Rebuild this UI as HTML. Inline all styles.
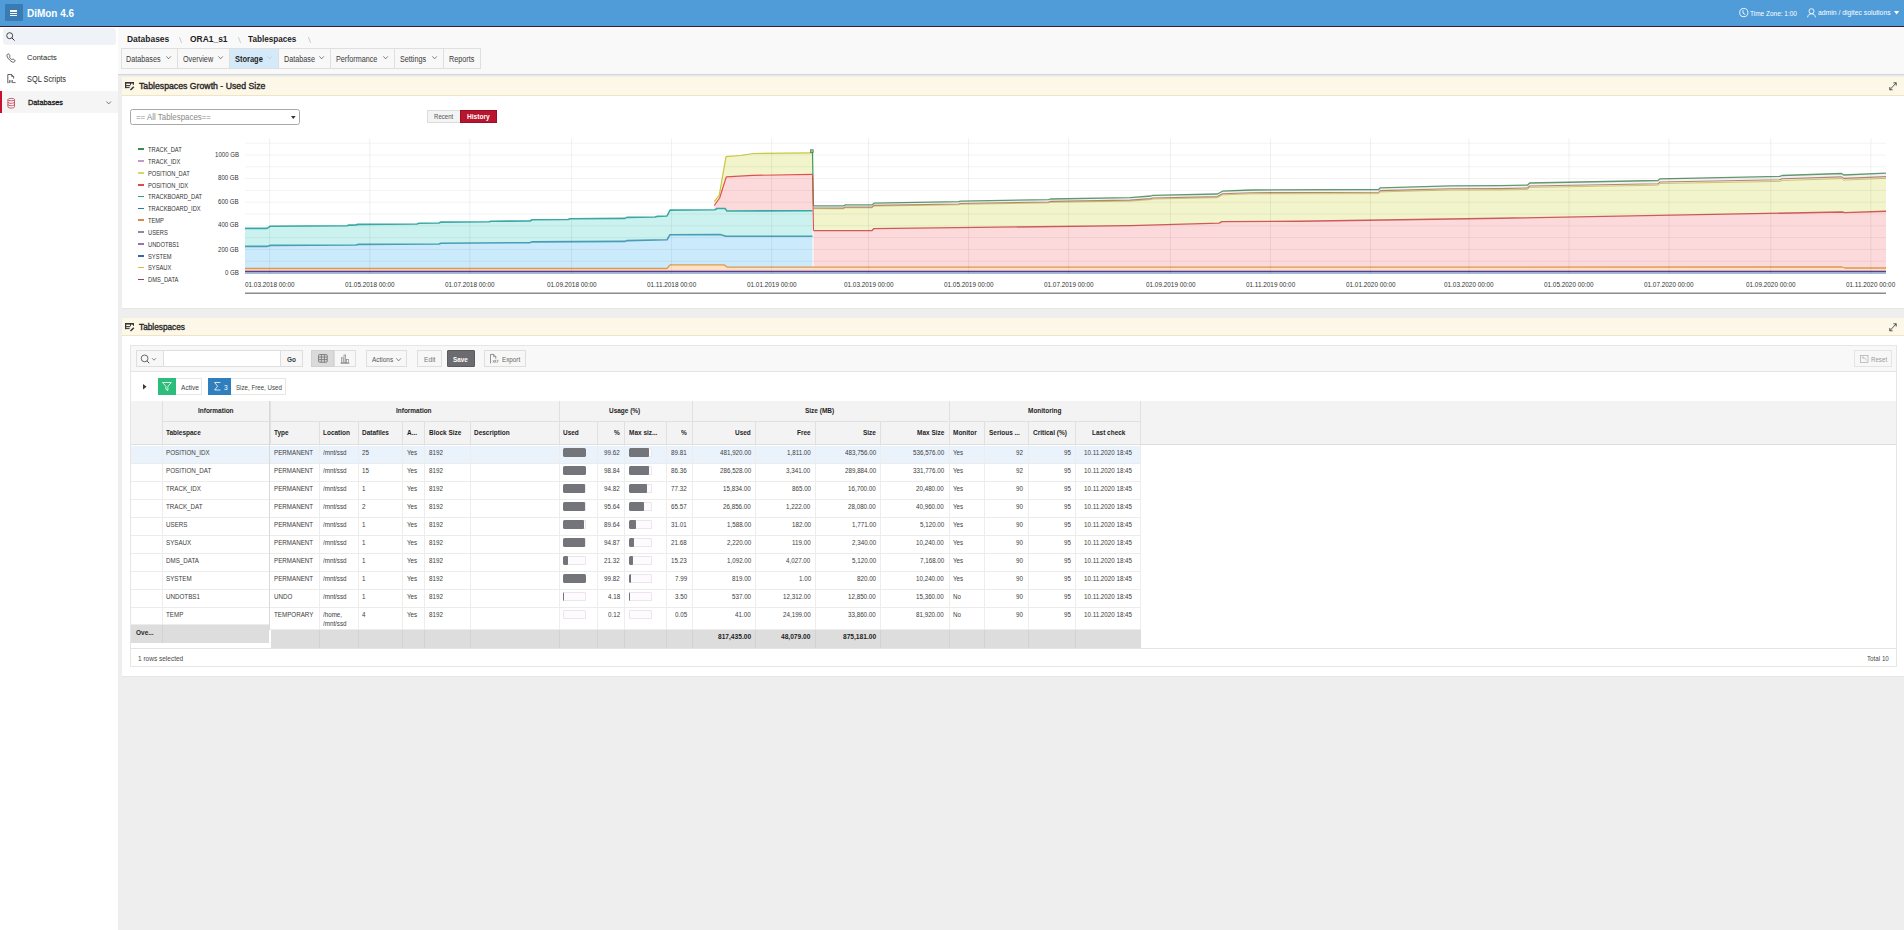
<!DOCTYPE html>
<html><head><meta charset="utf-8"><title>DiMon</title>
<style>
*{box-sizing:border-box;margin:0;padding:0}
html,body{width:1904px;height:930px;overflow:hidden}
body{position:relative;background:#eeeeee;font-family:"Liberation Sans", sans-serif;color:#333}
.a{position:absolute;white-space:nowrap;line-height:14px}
svg{position:absolute;overflow:visible}
</style></head><body>

<div class="a" style="left:0;top:0;width:1904px;height:26px;background:#4f9cd9"></div>
<div class="a" style="left:0;top:26px;width:1904px;height:1px;background:#3b1c33"></div>
<div class="a" style="left:5px;top:3.6px;width:17.5px;height:17.8px;background:#3b7bb4;border-radius:1px"></div>
<div class="a" style="left:10px;top:10.3px;width:7.1px;height:1.3px;background:#f4f8fb"></div>
<div class="a" style="left:10px;top:12.9px;width:7.1px;height:1.3px;background:#f4f8fb"></div>
<div class="a" style="left:10px;top:14.9px;width:7.1px;height:1.3px;background:#f4f8fb"></div>
<div class="a" style="left:27.30px;top:6.42px;font-size:10.60px;color:#fff;font-weight:bold;transform:scaleX(0.940);transform-origin:0 0">DiMon 4.6</div>
<svg style="left:1738.5px;top:8px" width="10" height="10" viewBox="0 0 10 10"><circle cx="4.8" cy="4.6" r="4.1" fill="none" stroke="#fff" stroke-width="0.9"/><path d="M4 2.2V5.2L6.4 6.6" fill="none" stroke="#fff" stroke-width="0.9"/></svg>
<div class="a" style="left:1750.30px;top:6.62px;font-size:8.00px;color:#fff;transform:scaleX(0.810);transform-origin:0 0">Time Zone: 1:00</div>
<svg style="left:1806.5px;top:8px" width="9" height="10" viewBox="0 0 9 10"><circle cx="4.5" cy="3.2" r="2.5" fill="none" stroke="#fff" stroke-width="0.9"/><path d="M0.6 9.3C0.9 6.8 2.5 5.8 4.5 5.8S8.1 6.8 8.4 9.3" fill="none" stroke="#fff" stroke-width="0.9"/></svg>
<div class="a" style="left:1817.50px;top:6.42px;font-size:8.00px;color:#fff;transform:scaleX(0.850);transform-origin:0 0">admin / digitec solutions</div>
<svg style="left:1893.5px;top:10.8px" width="6" height="5" viewBox="0 0 6 5"><path d="M0 0H5.2L2.6 3.6Z" fill="#fff"/></svg>
<div class="a" style="left:0;top:27px;width:117.6px;height:903px;background:#fff"></div>
<div class="a" style="left:3px;top:28.2px;width:111.5px;height:15.4px;background:#eff3f7;border-radius:2px;box-shadow:0.5px 0.6px 0 #e6e8ea"></div>
<svg style="left:6px;top:32px" width="10" height="10" viewBox="0 0 10 10"><circle cx="3.7" cy="3.7" r="3" fill="none" stroke="#333" stroke-width="0.9"/><path d="M5.9 5.9L8.6 8.6" stroke="#333" stroke-width="1"/></svg>
<svg style="left:6px;top:52.5px" width="10" height="10" viewBox="0 0 10 10"><path d="M1.2 1.6C1.8 0.8 2.4 0.6 2.9 1.2L3.9 2.6C4.2 3.1 3.9 3.5 3.4 3.9C3.6 4.8 5.2 6.5 6.1 6.7C6.5 6.2 6.9 5.9 7.4 6.2L8.8 7.2C9.4 7.7 9.1 8.3 8.4 8.9C7.4 9.7 5.6 9 3.6 7C1.4 4.8 0.4 2.6 1.2 1.6Z" fill="none" stroke="#444" stroke-width="0.85"/></svg>
<div class="a" style="left:27.00px;top:50.89px;font-size:7.80px;color:#2a2a2a;transform:scaleX(0.970);transform-origin:0 0">Contacts</div>
<svg style="left:6.5px;top:74.4px" width="10" height="10" viewBox="0 0 10 10"><path d="M0.8 9.2V0.5H4.6L6.6 2.5V4.6" fill="none" stroke="#444" stroke-width="0.85"/><path d="M4.6 0.5V2.5H6.6" fill="none" stroke="#444" stroke-width="0.7"/><path d="M2.6 6.2V8.6H1.6M4 6.2V8.6M5.4 6.2V8.6H8.6" fill="none" stroke="#444" stroke-width="0.8"/></svg>
<div class="a" style="left:27.00px;top:73.05px;font-size:8.20px;color:#2a2a2a;transform:scaleX(0.900);transform-origin:0 0">SQL Scripts</div>
<div class="a" style="left:0;top:90.8px;width:117.6px;height:22.6px;background:#f5f5f5"></div>
<div class="a" style="left:0;top:90.8px;width:2px;height:22.6px;background:#c8102e"></div>
<svg style="left:7.4px;top:97.5px" width="9" height="11" viewBox="0 0 9 11"><ellipse cx="4.2" cy="1.6" rx="3.3" ry="1.2" fill="none" stroke="#c0394b" stroke-width="0.8"/><path d="M0.9 1.6V8.8C0.9 9.6 2.4 10.1 4.2 10.1S7.5 9.6 7.5 8.8V1.6M0.9 4C0.9 4.8 2.4 5.3 4.2 5.3S7.5 4.8 7.5 4M0.9 6.4C0.9 7.2 2.4 7.7 4.2 7.7S7.5 7.2 7.5 6.4" fill="none" stroke="#c0394b" stroke-width="0.8"/></svg>
<div class="a" style="left:27.50px;top:95.86px;font-size:7.60px;color:#1a1a1a;transform:scaleX(0.965);transform-origin:0 0;-webkit-text-stroke:0.3px #1a1a1a">Databases</div>
<svg style="left:105.8px;top:101px" width="6" height="4" viewBox="0 0 6 4"><path d="M0.4 0.5L2.7 2.9L5 0.5" fill="none" stroke="#555" stroke-width="0.8"/></svg>
<div class="a" style="left:117.6px;top:27px;width:1786.4px;height:47.5px;background:#f9f9fa;border-bottom:1px solid #d6d6d6"></div>
<div class="a" style="left:117.6px;top:74.5px;width:1786.4px;height:1.5px;background:#e9e9e9"></div>
<div class="a" style="left:126.60px;top:31.74px;font-size:9.40px;color:#1e1e1e;font-weight:bold;transform:scaleX(0.900);transform-origin:0 0">Databases</div>
<div class="a" style="left:189.80px;top:31.74px;font-size:9.40px;color:#1e1e1e;font-weight:bold;transform:scaleX(0.900);transform-origin:0 0">ORA1_s1</div>
<div class="a" style="left:248.30px;top:31.74px;font-size:9.40px;color:#1e1e1e;font-weight:bold;transform:scaleX(0.870);transform-origin:0 0">Tablespaces</div>
<svg style="left:178.9px;top:36.7px" width="4" height="6" viewBox="0 0 4 6"><path d="M0.4 0.2L2.6 5.8" stroke="#b4b4b4" stroke-width="0.7"/></svg>
<svg style="left:237.8px;top:36.7px" width="4" height="6" viewBox="0 0 4 6"><path d="M0.4 0.2L2.6 5.8" stroke="#b4b4b4" stroke-width="0.7"/></svg>
<svg style="left:307.5px;top:36.7px" width="4" height="6" viewBox="0 0 4 6"><path d="M0.4 0.2L2.6 5.8" stroke="#b4b4b4" stroke-width="0.7"/></svg>
<div class="a" style="left:121.2px;top:48.4px;width:56.3px;height:20px;background:#f8f8f8"></div>
<div class="a" style="left:120.7px;top:48.4px;width:0.8px;height:20px;background:#dfdfdf"></div>
<div class="a" style="left:126.40px;top:51.95px;font-size:8.50px;color:#3a3a3a;transform:scaleX(0.850);transform-origin:0 0">Databases</div>
<svg style="left:166.0px;top:56px" width="6" height="4" viewBox="0 0 6 4"><path d="M0.4 0.4L2.6 2.8L4.8 0.4" fill="none" stroke="#555" stroke-width="0.75"/></svg>
<div class="a" style="left:177.5px;top:48.4px;width:52.3px;height:20px;background:#f8f8f8"></div>
<div class="a" style="left:177.0px;top:48.4px;width:0.8px;height:20px;background:#dfdfdf"></div>
<div class="a" style="left:182.70px;top:51.95px;font-size:8.50px;color:#3a3a3a;transform:scaleX(0.850);transform-origin:0 0">Overview</div>
<svg style="left:218.3px;top:56px" width="6" height="4" viewBox="0 0 6 4"><path d="M0.4 0.4L2.6 2.8L4.8 0.4" fill="none" stroke="#555" stroke-width="0.75"/></svg>
<div class="a" style="left:229.8px;top:48.4px;width:48.9px;height:20px;background:#d5eaf8"></div>
<div class="a" style="left:229.3px;top:48.4px;width:0.8px;height:20px;background:#dfdfdf"></div>
<div class="a" style="left:234.70px;top:51.95px;font-size:8.50px;color:#1e1e1e;font-weight:bold;transform:scaleX(0.880);transform-origin:0 0">Storage</div>
<svg style="left:267.2px;top:56px" width="6" height="4" viewBox="0 0 6 4"><path d="M0.4 0.4L2.6 2.8L4.8 0.4" fill="none" stroke="#a9cce3" stroke-width="0.75"/></svg>
<div class="a" style="left:278.7px;top:48.4px;width:51.8px;height:20px;background:#f8f8f8"></div>
<div class="a" style="left:278.2px;top:48.4px;width:0.8px;height:20px;background:#dfdfdf"></div>
<div class="a" style="left:283.90px;top:51.95px;font-size:8.50px;color:#3a3a3a;transform:scaleX(0.850);transform-origin:0 0">Database</div>
<svg style="left:319.0px;top:56px" width="6" height="4" viewBox="0 0 6 4"><path d="M0.4 0.4L2.6 2.8L4.8 0.4" fill="none" stroke="#555" stroke-width="0.75"/></svg>
<div class="a" style="left:330.5px;top:48.4px;width:63.9px;height:20px;background:#f8f8f8"></div>
<div class="a" style="left:330.0px;top:48.4px;width:0.8px;height:20px;background:#dfdfdf"></div>
<div class="a" style="left:335.70px;top:51.95px;font-size:8.50px;color:#3a3a3a;transform:scaleX(0.850);transform-origin:0 0">Performance</div>
<svg style="left:382.9px;top:56px" width="6" height="4" viewBox="0 0 6 4"><path d="M0.4 0.4L2.6 2.8L4.8 0.4" fill="none" stroke="#555" stroke-width="0.75"/></svg>
<div class="a" style="left:394.4px;top:48.4px;width:48.9px;height:20px;background:#f8f8f8"></div>
<div class="a" style="left:393.9px;top:48.4px;width:0.8px;height:20px;background:#dfdfdf"></div>
<div class="a" style="left:399.60px;top:51.95px;font-size:8.50px;color:#3a3a3a;transform:scaleX(0.850);transform-origin:0 0">Settings</div>
<svg style="left:431.8px;top:56px" width="6" height="4" viewBox="0 0 6 4"><path d="M0.4 0.4L2.6 2.8L4.8 0.4" fill="none" stroke="#555" stroke-width="0.75"/></svg>
<div class="a" style="left:443.3px;top:48.4px;width:36.5px;height:20px;background:#f8f8f8"></div>
<div class="a" style="left:442.8px;top:48.4px;width:0.8px;height:20px;background:#dfdfdf"></div>
<div class="a" style="left:448.50px;top:51.95px;font-size:8.50px;color:#3a3a3a;transform:scaleX(0.850);transform-origin:0 0">Reports</div>
<div class="a" style="left:121.2px;top:48.2px;width:359.4px;height:20.6px;border:0.8px solid #dfdfdf"></div>
<div class="a" style="left:121.6px;top:77px;width:1782.4px;height:231px;background:#fff;box-shadow:0 0.8px 0 #e2e2e2"></div>
<div class="a" style="left:121.6px;top:77px;width:1782.4px;height:18.8px;background:#fcf7e6;border-bottom:0.8px solid #efe4c6"></div>
<svg style="left:122px;top:78px" width="16" height="16" viewBox="0 0 16 16"><g fill="#363636"><rect x="3" y="4" width="8.9" height="1.6"/><rect x="3" y="4" width="1.2" height="6.1"/><rect x="8" y="4" width="1" height="2.9"/><rect x="10.9" y="4" width="1" height="2.9"/><rect x="3" y="7.1" width="5.3" height="1.1"/><rect x="3" y="9.1" width="4.6" height="1"/></g><path d="M8.5 12L11.8 8.7" stroke="#363636" stroke-width="1.5"/></svg>
<div class="a" style="left:138.80px;top:79.45px;font-size:8.80px;color:#262626;transform:scaleX(0.990);transform-origin:0 0;-webkit-text-stroke:0.35px #262626">Tablespaces Growth - Used Size</div>
<svg style="left:1889px;top:82px" width="8" height="8.6" viewBox="0 0 8 8.6"><path d="M0.8 7.8L7.2 0.8M4.4 0.8H7.2V3.6M0.8 5V7.8H3.6" fill="none" stroke="#3a3a3a" stroke-width="0.85"/></svg>
<div class="a" style="left:121.6px;top:317.7px;width:1782.4px;height:358.00000000000006px;background:#fff;box-shadow:0 0.8px 0 #e2e2e2"></div>
<div class="a" style="left:121.6px;top:317.7px;width:1782.4px;height:18.8px;background:#fcf7e6;border-bottom:0.8px solid #efe4c6"></div>
<svg style="left:122px;top:319px" width="16" height="16" viewBox="0 0 16 16"><g fill="#363636"><rect x="3" y="4" width="8.9" height="1.6"/><rect x="3" y="4" width="1.2" height="6.1"/><rect x="8" y="4" width="1" height="2.9"/><rect x="10.9" y="4" width="1" height="2.9"/><rect x="3" y="7.1" width="5.3" height="1.1"/><rect x="3" y="9.1" width="4.6" height="1"/></g><path d="M8.5 12L11.8 8.7" stroke="#363636" stroke-width="1.5"/></svg>
<div class="a" style="left:138.80px;top:319.54px;font-size:9.10px;color:#262626;transform:scaleX(0.910);transform-origin:0 0;-webkit-text-stroke:0.35px #262626">Tablespaces</div>
<svg style="left:1889px;top:322.7px" width="8" height="8.6" viewBox="0 0 8 8.6"><path d="M0.8 7.8L7.2 0.8M4.4 0.8H7.2V3.6M0.8 5V7.8H3.6" fill="none" stroke="#3a3a3a" stroke-width="0.85"/></svg>
<div class="a" style="left:130.2px;top:109.2px;width:169.4px;height:15.5px;border:0.9px solid #a8a8a8;border-radius:2.5px;background:#fff"></div>
<div class="a" style="left:136.30px;top:111.05px;font-size:8.20px;color:#8a8a8a;transform:scaleX(0.965);transform-origin:0 0">== All Tablespaces==</div>
<svg style="left:290.8px;top:115.8px" width="5" height="4" viewBox="0 0 5 4"><path d="M0 0H4.6L2.3 2.9Z" fill="#333"/></svg>
<div class="a" style="left:426.6px;top:109.5px;width:33.6px;height:13.1px;background:#f4f4f4;border:0.8px solid #dcdcdc;border-right:none"></div>
<div class="a" style="left:433.60px;top:109.91px;font-size:6.60px;color:#555;transform:scaleX(0.920);transform-origin:0 0">Recent</div>
<div class="a" style="left:459.9px;top:109.5px;width:36.8px;height:13.1px;background:#b8152f;border:0.6px solid #9a0f25"></div>
<div class="a" style="left:466.70px;top:110.14px;font-size:7.10px;color:#fff;font-weight:bold;transform:scaleX(0.930);transform-origin:0 0">History</div>
<div class="a" style="left:137.9px;top:148.29999999999998px;width:6.1px;height:1.9px;background:#3d8a4f"></div>
<div class="a" style="left:148.00px;top:143.07px;font-size:7.00px;color:#333;transform:scaleX(0.820);transform-origin:0 0">TRACK_DAT</div>
<div class="a" style="left:137.9px;top:160.2px;width:6.1px;height:1.9px;background:#c39ac6"></div>
<div class="a" style="left:148.00px;top:154.97px;font-size:7.00px;color:#333;transform:scaleX(0.820);transform-origin:0 0">TRACK_IDX</div>
<div class="a" style="left:137.9px;top:171.9px;width:6.1px;height:1.9px;background:#d3d86a"></div>
<div class="a" style="left:148.00px;top:166.67px;font-size:7.00px;color:#333;transform:scaleX(0.820);transform-origin:0 0">POSITION_DAT</div>
<div class="a" style="left:137.9px;top:183.79999999999998px;width:6.1px;height:1.9px;background:#e04a4a"></div>
<div class="a" style="left:148.00px;top:178.57px;font-size:7.00px;color:#333;transform:scaleX(0.820);transform-origin:0 0">POSITION_IDX</div>
<div class="a" style="left:137.9px;top:195.6px;width:6.1px;height:1.9px;background:#2a9a8a"></div>
<div class="a" style="left:148.00px;top:190.37px;font-size:7.00px;color:#333;transform:scaleX(0.820);transform-origin:0 0">TRACKBOARD_DAT</div>
<div class="a" style="left:137.9px;top:207.6px;width:6.1px;height:1.9px;background:#2a7aa6"></div>
<div class="a" style="left:148.00px;top:202.37px;font-size:7.00px;color:#333;transform:scaleX(0.820);transform-origin:0 0">TRACKBOARD_IDX</div>
<div class="a" style="left:137.9px;top:219.29999999999998px;width:6.1px;height:1.9px;background:#d98a4a"></div>
<div class="a" style="left:148.00px;top:214.07px;font-size:7.00px;color:#333;transform:scaleX(0.820);transform-origin:0 0">TEMP</div>
<div class="a" style="left:137.9px;top:231.1px;width:6.1px;height:1.9px;background:#8a8a9a"></div>
<div class="a" style="left:148.00px;top:225.87px;font-size:7.00px;color:#333;transform:scaleX(0.820);transform-origin:0 0">USERS</div>
<div class="a" style="left:137.9px;top:243.1px;width:6.1px;height:1.9px;background:#9a70b0"></div>
<div class="a" style="left:148.00px;top:237.87px;font-size:7.00px;color:#333;transform:scaleX(0.820);transform-origin:0 0">UNDOTBS1</div>
<div class="a" style="left:137.9px;top:255.1px;width:6.1px;height:1.9px;background:#3a6a9a"></div>
<div class="a" style="left:148.00px;top:249.87px;font-size:7.00px;color:#333;transform:scaleX(0.820);transform-origin:0 0">SYSTEM</div>
<div class="a" style="left:137.9px;top:266.6px;width:6.1px;height:1.9px;background:#d4b84a"></div>
<div class="a" style="left:148.00px;top:261.37px;font-size:7.00px;color:#333;transform:scaleX(0.820);transform-origin:0 0">SYSAUX</div>
<div class="a" style="left:137.9px;top:278.5px;width:6.1px;height:1.9px;background:#a03a6a"></div>
<div class="a" style="left:148.00px;top:273.27px;font-size:7.00px;color:#333;transform:scaleX(0.820);transform-origin:0 0">DMS_DATA</div>
<div class="a" style="left:214.96px;top:147.97px;font-size:7.00px;color:#333;transform:scaleX(0.870);transform-origin:0 0">1000 GB</div>
<div class="a" style="left:218.35px;top:171.37px;font-size:7.00px;color:#333;transform:scaleX(0.870);transform-origin:0 0">800 GB</div>
<div class="a" style="left:218.35px;top:194.57px;font-size:7.00px;color:#333;transform:scaleX(0.870);transform-origin:0 0">600 GB</div>
<div class="a" style="left:218.35px;top:218.37px;font-size:7.00px;color:#333;transform:scaleX(0.870);transform-origin:0 0">400 GB</div>
<div class="a" style="left:218.35px;top:242.57px;font-size:7.00px;color:#333;transform:scaleX(0.870);transform-origin:0 0">200 GB</div>
<div class="a" style="left:225.12px;top:265.77px;font-size:7.00px;color:#333;transform:scaleX(0.870);transform-origin:0 0">0 GB</div>
<svg style="left:0;top:0" width="1904" height="300" viewBox="0 0 1904 300">
<polygon points="245.0,246.4 267.0,246.4 270.0,245.4 356.0,245.0 358.0,244.4 439.0,244.0 441.0,243.2 530.0,242.6 532.0,241.9 625.0,241.4 627.0,240.6 667.0,239.8 670.0,234.7 720.0,234.5 726.0,236.3 812.5,236.3 812.5,267.1 727.0,267.1 724.0,264.8 670.0,264.8 667.0,268.5 245.0,268.5" fill="#cbeafb" fill-opacity="1"/>
<polygon points="245.0,228.4 267.0,228.4 270.0,226.3 347.0,225.8 349.0,225.1 356.0,224.9 358.0,224.4 417.0,224.0 419.0,223.3 439.0,223.0 441.0,222.1 489.0,221.8 491.0,221.2 530.0,221.0 532.0,219.8 568.0,219.5 570.0,218.7 625.0,218.4 627.0,217.4 655.0,217.0 657.0,216.4 667.0,216.0 670.0,210.1 715.0,209.7 717.0,208.5 725.0,208.5 727.0,211.0 812.5,210.7 812.5,236.3 726.0,236.3 720.0,234.5 670.0,234.7 667.0,239.8 627.0,240.6 625.0,241.4 532.0,241.9 530.0,242.6 441.0,243.2 439.0,244.0 358.0,244.4 356.0,245.0 270.0,245.4 267.0,246.4 245.0,246.4" fill="#cbf2ef" fill-opacity="1"/>
<polygon points="714.3,205.5 719.6,198.0 726.3,176.9 752.7,175.4 812.5,174.3 812.5,210.7 727.0,211.0 725.0,208.5 717.0,208.5 715.0,209.7 714.3,209.7" fill="#fcd9da" fill-opacity="1"/>
<polygon points="714.3,201.7 719.3,195.0 726.0,156.6 740.6,155.5 753.0,153.5 812.5,152.8 812.5,174.3 752.7,175.4 726.3,176.9 719.6,198.0 714.3,205.5" fill="#f2f4cc" fill-opacity="1"/>
<polygon points="813.5,230.6 872.0,230.6 874.0,228.6 1130.0,225.6 1219.0,223.1 1222.0,221.6 1300.0,221.3 1450.0,219.0 1500.0,218.3 1842.0,212.0 1845.0,212.6 1886.0,211.3 1886.0,268.0 1845.0,268.0 1842.0,267.0 813.5,267.1" fill="#fcd9da" fill-opacity="1"/>
<polygon points="813.5,208.7 843.5,208.8 845.5,207.8 872.0,207.8 874.0,206.1 958.6,204.8 960.6,204.3 1048.5,202.9 1050.5,202.3 1130.0,201.1 1150.8,199.6 1152.8,199.0 1217.4,197.7 1222.4,194.9 1251.0,193.8 1378.7,193.6 1380.4,191.9 1450.0,190.0 1500.0,189.9 1527.6,189.4 1529.6,187.4 1658.0,185.2 1660.0,183.5 1780.0,181.4 1782.0,180.5 1841.6,178.6 1843.7,180.1 1886.0,178.3 1886.0,211.3 1845.0,212.6 1842.0,212.0 1500.0,218.3 1450.0,219.0 1300.0,221.3 1222.0,221.6 1219.0,223.1 1130.0,225.6 874.0,228.6 872.0,230.6 813.5,230.6" fill="#f2f4cc" fill-opacity="1"/>
<polygon points="813.5,205.9 843.5,205.9 845.5,204.9 872.0,204.9 874.0,203.2 958.6,201.7 960.6,201.2 1048.5,199.6 1050.5,199.0 1130.0,197.6 1150.8,196.0 1152.8,195.4 1217.4,194.0 1222.4,191.2 1251.0,190.0 1378.7,189.5 1380.4,187.8 1450.0,185.8 1500.0,185.6 1527.6,185.0 1529.6,183.0 1658.0,180.5 1660.0,178.8 1780.0,176.4 1782.0,175.5 1841.6,173.5 1843.7,175.0 1886.0,173.1 1886.0,178.3 1843.7,180.1 1841.6,178.6 1782.0,180.5 1780.0,181.4 1660.0,183.5 1658.0,185.2 1529.6,187.4 1527.6,189.4 1500.0,189.9 1450.0,190.0 1380.4,191.9 1378.7,193.6 1251.0,193.8 1222.4,194.9 1217.4,197.7 1152.8,199.0 1150.8,199.6 1130.0,201.1 1050.5,202.3 1048.5,202.9 960.6,204.3 958.6,204.8 874.0,206.1 872.0,207.8 845.5,207.8 843.5,208.8 813.5,208.7" fill="#f6f0f2" fill-opacity="1"/>
<polygon points="245.0,268.5 667.0,268.5 670.0,264.8 724.0,264.8 727.0,267.1 1842.0,267.0 1845.0,268.0 1886.0,268.0 1886.0,270.6 245.0,270.6" fill="#fde3c4" fill-opacity="1"/>
<rect x="245" y="272" width="1641" height="1.9" fill="#a4b4dc"/>
<line x1="245" y1="270.4" x2="1886" y2="270.4" stroke="#e8b8dc" stroke-width="0.6"/>
<line x1="245" y1="271.4" x2="1886" y2="271.4" stroke="#5e3e7e" stroke-width="1.1"/>
<polyline points="245.0,268.5 667.0,268.5 670.0,264.8 724.0,264.8 727.0,267.1 1842.0,267.0 1845.0,268.0 1886.0,268.0" fill="none" stroke="#d99a52" stroke-width="1.3" stroke-linejoin="round"/>
<polyline points="245.0,246.4 267.0,246.4 270.0,245.4 356.0,245.0 358.0,244.4 439.0,244.0 441.0,243.2 530.0,242.6 532.0,241.9 625.0,241.4 627.0,240.6 667.0,239.8 670.0,234.7 720.0,234.5 726.0,236.3 812.5,236.3" fill="none" stroke="#4a9db6" stroke-width="1.6" stroke-linejoin="round"/>
<polyline points="245.0,228.4 267.0,228.4 270.0,226.3 347.0,225.8 349.0,225.1 356.0,224.9 358.0,224.4 417.0,224.0 419.0,223.3 439.0,223.0 441.0,222.1 489.0,221.8 491.0,221.2 530.0,221.0 532.0,219.8 568.0,219.5 570.0,218.7 625.0,218.4 627.0,217.4 655.0,217.0 657.0,216.4 667.0,216.0 670.0,210.1 715.0,209.7 717.0,208.5 725.0,208.5 727.0,211.0 812.5,210.7" fill="none" stroke="#3aa9a6" stroke-width="1.6" stroke-linejoin="round"/>
<polyline points="714.3,205.5 719.6,198.0 726.3,176.9 752.7,175.4 812.5,174.3" fill="none" stroke="#e05050" stroke-width="1.2" stroke-linejoin="round"/>
<polyline points="714.3,201.7 719.3,195.0 726.0,156.6 740.6,155.5 753.0,153.5 812.5,152.8" fill="none" stroke="#c8c83a" stroke-width="1.2" stroke-linejoin="round"/>
<polyline points="813.5,230.6 872.0,230.6 874.0,228.6 1130.0,225.6 1219.0,223.1 1222.0,221.6 1300.0,221.3 1450.0,219.0 1500.0,218.3 1842.0,212.0 1845.0,212.6 1886.0,211.3" fill="none" stroke="#cf5a5a" stroke-width="1.4" stroke-linejoin="round"/>
<polyline points="813.5,208.7 843.5,208.8 845.5,207.8 872.0,207.8 874.0,206.1 958.6,204.8 960.6,204.3 1048.5,202.9 1050.5,202.3 1130.0,201.1 1150.8,199.6 1152.8,199.0 1217.4,197.7 1222.4,194.9 1251.0,193.8 1378.7,193.6 1380.4,191.9 1450.0,190.0 1500.0,189.9 1527.6,189.4 1529.6,187.4 1658.0,185.2 1660.0,183.5 1780.0,181.4 1782.0,180.5 1841.6,178.6 1843.7,180.1 1886.0,178.3" fill="none" stroke="#c8c060" stroke-width="0.9" stroke-linejoin="round"/>
<polyline points="813.5,208.0 843.5,208.1 845.5,207.1 872.0,207.1 874.0,205.4 958.6,204.0 960.6,203.5 1048.5,202.0 1050.5,201.4 1130.0,200.1 1150.8,198.6 1152.8,198.0 1217.4,196.6 1222.4,193.8 1251.0,192.7 1378.7,192.3 1380.4,190.6 1450.0,188.7 1500.0,188.6 1527.6,188.0 1529.6,186.0 1658.0,183.7 1660.0,182.0 1780.0,179.7 1782.0,178.8 1841.6,176.9 1843.7,178.4 1886.0,176.6" fill="none" stroke="#b08a70" stroke-width="1.1" stroke-linejoin="round"/>
<polyline points="813.5,205.9 843.5,205.9 845.5,204.9 872.0,204.9 874.0,203.2 958.6,201.7 960.6,201.2 1048.5,199.6 1050.5,199.0 1130.0,197.6 1150.8,196.0 1152.8,195.4 1217.4,194.0 1222.4,191.2 1251.0,190.0 1378.7,189.5 1380.4,187.8 1450.0,185.8 1500.0,185.6 1527.6,185.0 1529.6,183.0 1658.0,180.5 1660.0,178.8 1780.0,176.4 1782.0,175.5 1841.6,173.5 1843.7,175.0 1886.0,173.1" fill="none" stroke="#5f9a70" stroke-width="1.3" stroke-linejoin="round"/>
<polyline points="812.5,152 813.5,205.9" fill="none" stroke="#3e9a58" stroke-width="1.2"/>
<polyline points="812.5,174.3 813.5,230.6" fill="none" stroke="#e05050" stroke-width="1.1"/>
<rect x="810.6" y="149.8" width="2.6" height="2.6" fill="#9fc0a0" stroke="#3e7a50" stroke-width="0.7"/>
<line x1="245" y1="273.0" x2="1886" y2="273.0" stroke="#000" stroke-opacity="0.065" stroke-width="0.8"/>
<line x1="245" y1="261.2" x2="1886" y2="261.2" stroke="#000" stroke-opacity="0.065" stroke-width="0.8"/>
<line x1="245" y1="249.4" x2="1886" y2="249.4" stroke="#000" stroke-opacity="0.065" stroke-width="0.8"/>
<line x1="245" y1="237.6" x2="1886" y2="237.6" stroke="#000" stroke-opacity="0.065" stroke-width="0.8"/>
<line x1="245" y1="225.8" x2="1886" y2="225.8" stroke="#000" stroke-opacity="0.065" stroke-width="0.8"/>
<line x1="245" y1="214.0" x2="1886" y2="214.0" stroke="#000" stroke-opacity="0.065" stroke-width="0.8"/>
<line x1="245" y1="202.2" x2="1886" y2="202.2" stroke="#000" stroke-opacity="0.065" stroke-width="0.8"/>
<line x1="245" y1="190.4" x2="1886" y2="190.4" stroke="#000" stroke-opacity="0.065" stroke-width="0.8"/>
<line x1="245" y1="178.6" x2="1886" y2="178.6" stroke="#000" stroke-opacity="0.065" stroke-width="0.8"/>
<line x1="245" y1="166.8" x2="1886" y2="166.8" stroke="#000" stroke-opacity="0.065" stroke-width="0.8"/>
<line x1="245" y1="155.0" x2="1886" y2="155.0" stroke="#000" stroke-opacity="0.065" stroke-width="0.8"/>
<line x1="245" y1="143.2" x2="1886" y2="143.2" stroke="#000" stroke-opacity="0.065" stroke-width="0.8"/>
<line x1="269.7" y1="138" x2="269.7" y2="274" stroke="#000" stroke-opacity="0.08" stroke-width="0.8"/>
<line x1="369.8" y1="138" x2="369.8" y2="274" stroke="#000" stroke-opacity="0.08" stroke-width="0.8"/>
<line x1="469.9" y1="138" x2="469.9" y2="274" stroke="#000" stroke-opacity="0.08" stroke-width="0.8"/>
<line x1="571.6" y1="138" x2="571.6" y2="274" stroke="#000" stroke-opacity="0.08" stroke-width="0.8"/>
<line x1="671.6" y1="138" x2="671.6" y2="274" stroke="#000" stroke-opacity="0.08" stroke-width="0.8"/>
<line x1="771.7" y1="138" x2="771.7" y2="274" stroke="#000" stroke-opacity="0.08" stroke-width="0.8"/>
<line x1="868.5" y1="138" x2="868.5" y2="274" stroke="#000" stroke-opacity="0.08" stroke-width="0.8"/>
<line x1="968.6" y1="138" x2="968.6" y2="274" stroke="#000" stroke-opacity="0.08" stroke-width="0.8"/>
<line x1="1068.7" y1="138" x2="1068.7" y2="274" stroke="#000" stroke-opacity="0.08" stroke-width="0.8"/>
<line x1="1170.4" y1="138" x2="1170.4" y2="274" stroke="#000" stroke-opacity="0.08" stroke-width="0.8"/>
<line x1="1270.5" y1="138" x2="1270.5" y2="274" stroke="#000" stroke-opacity="0.08" stroke-width="0.8"/>
<line x1="1370.5" y1="138" x2="1370.5" y2="274" stroke="#000" stroke-opacity="0.08" stroke-width="0.8"/>
<line x1="1469.0" y1="138" x2="1469.0" y2="274" stroke="#000" stroke-opacity="0.08" stroke-width="0.8"/>
<line x1="1569.0" y1="138" x2="1569.0" y2="274" stroke="#000" stroke-opacity="0.08" stroke-width="0.8"/>
<line x1="1669.1" y1="138" x2="1669.1" y2="274" stroke="#000" stroke-opacity="0.08" stroke-width="0.8"/>
<line x1="1770.8" y1="138" x2="1770.8" y2="274" stroke="#000" stroke-opacity="0.08" stroke-width="0.8"/>
<line x1="1870.9" y1="138" x2="1870.9" y2="274" stroke="#000" stroke-opacity="0.08" stroke-width="0.8"/>
<line x1="245" y1="293.3" x2="1886" y2="293.3" stroke="#8c8c8c" stroke-width="1.6"/>
</svg>
<div class="a" style="left:245.00px;top:277.76px;font-size:7.60px;color:#333;transform:scaleX(0.840);transform-origin:0 0">01.03.2018 00:00</div>
<div class="a" style="left:344.93px;top:277.76px;font-size:7.60px;color:#333;transform:scaleX(0.840);transform-origin:0 0">01.05.2018 00:00</div>
<div class="a" style="left:445.00px;top:277.76px;font-size:7.60px;color:#333;transform:scaleX(0.840);transform-origin:0 0">01.07.2018 00:00</div>
<div class="a" style="left:546.72px;top:277.76px;font-size:7.60px;color:#333;transform:scaleX(0.840);transform-origin:0 0">01.09.2018 00:00</div>
<div class="a" style="left:647.03px;top:277.76px;font-size:7.60px;color:#333;transform:scaleX(0.840);transform-origin:0 0">01.11.2018 00:00</div>
<div class="a" style="left:746.87px;top:277.76px;font-size:7.60px;color:#333;transform:scaleX(0.840);transform-origin:0 0">01.01.2019 00:00</div>
<div class="a" style="left:843.66px;top:277.76px;font-size:7.60px;color:#333;transform:scaleX(0.840);transform-origin:0 0">01.03.2019 00:00</div>
<div class="a" style="left:943.73px;top:277.76px;font-size:7.60px;color:#333;transform:scaleX(0.840);transform-origin:0 0">01.05.2019 00:00</div>
<div class="a" style="left:1043.81px;top:277.76px;font-size:7.60px;color:#333;transform:scaleX(0.840);transform-origin:0 0">01.07.2019 00:00</div>
<div class="a" style="left:1145.53px;top:277.76px;font-size:7.60px;color:#333;transform:scaleX(0.840);transform-origin:0 0">01.09.2019 00:00</div>
<div class="a" style="left:1245.84px;top:277.76px;font-size:7.60px;color:#333;transform:scaleX(0.840);transform-origin:0 0">01.11.2019 00:00</div>
<div class="a" style="left:1345.68px;top:277.76px;font-size:7.60px;color:#333;transform:scaleX(0.840);transform-origin:0 0">01.01.2020 00:00</div>
<div class="a" style="left:1444.11px;top:277.76px;font-size:7.60px;color:#333;transform:scaleX(0.840);transform-origin:0 0">01.03.2020 00:00</div>
<div class="a" style="left:1544.18px;top:277.76px;font-size:7.60px;color:#333;transform:scaleX(0.840);transform-origin:0 0">01.05.2020 00:00</div>
<div class="a" style="left:1644.26px;top:277.76px;font-size:7.60px;color:#333;transform:scaleX(0.840);transform-origin:0 0">01.07.2020 00:00</div>
<div class="a" style="left:1745.98px;top:277.76px;font-size:7.60px;color:#333;transform:scaleX(0.840);transform-origin:0 0">01.09.2020 00:00</div>
<div class="a" style="left:1846.29px;top:277.76px;font-size:7.60px;color:#333;transform:scaleX(0.840);transform-origin:0 0">01.11.2020 00:00</div>
<div class="a" style="left:130.4px;top:345px;width:1766.1999999999998px;height:321.6px;border:0.9px solid #e6e6e6;background:#fff"></div>
<div class="a" style="left:131.3px;top:345.9px;width:1764.3999999999999px;height:26.6px;background:#f8f8f8;border-bottom:0.9px solid #e4e4e4"></div>
<div class="a" style="left:135.6px;top:350.4px;width:28.2px;height:17.0px;background:#f7f7f7;border:0.8px solid #dedede;border-radius:0px"></div>
<div class="a" style="left:163.6px;top:350.4px;width:116.8px;height:17px;background:#fff;border-top:0.8px solid #dedede;border-bottom:0.8px solid #dedede"></div>
<svg style="left:140px;top:353.5px" width="20" height="11" viewBox="0 0 20 11"><circle cx="4.6" cy="4.4" r="3.4" fill="none" stroke="#444" stroke-width="0.8"/><path d="M7 6.9L9.3 9.3" stroke="#444" stroke-width="0.9"/><path d="M12 4.2L14 6.2L16 4.2" fill="none" stroke="#555" stroke-width="0.7"/></svg>
<div class="a" style="left:280.2px;top:350.4px;width:22.6px;height:17.0px;background:#f7f7f7;border:0.8px solid #dedede;border-radius:0px"></div>
<div class="a" style="left:287.10px;top:353.07px;font-size:7.00px;color:#3a3a3a;font-weight:bold;transform:scaleX(0.920);transform-origin:0 0">Go</div>
<div class="a" style="left:311.2px;top:350.4px;width:22.6px;height:17.0px;background:#dadada;border:0.8px solid #d0d0d0;border-radius:0px"></div>
<div class="a" style="left:333.5px;top:350.4px;width:22.3px;height:17.0px;background:#f7f7f7;border:0.8px solid #dedede;border-radius:0px"></div>
<svg style="left:318px;top:354.3px" width="10" height="9" viewBox="0 0 10 9"><rect x="0.6" y="0.6" width="8.6" height="7.6" rx="0.8" fill="none" stroke="#666" stroke-width="0.8"/><path d="M0.6 3.1H9.2M0.6 5.6H9.2M3.4 0.6V8.2M6.4 0.6V8.2" stroke="#666" stroke-width="0.7"/></svg>
<svg style="left:340px;top:354px" width="10" height="10" viewBox="0 0 10 10"><path d="M0.5 9.2H9.5" stroke="#777" stroke-width="0.7"/><rect x="1.4" y="3.8" width="1.7" height="5.2" fill="none" stroke="#777" stroke-width="0.6"/><rect x="4" y="1" width="1.7" height="8" fill="none" stroke="#777" stroke-width="0.6"/><rect x="6.6" y="5.6" width="1.7" height="3.4" fill="none" stroke="#777" stroke-width="0.6"/></svg>
<div class="a" style="left:365.5px;top:350.4px;width:41.8px;height:17.0px;background:#f7f7f7;border:0.8px solid #dedede;border-radius:0px"></div>
<div class="a" style="left:372.10px;top:353.07px;font-size:7.00px;color:#555;transform:scaleX(0.920);transform-origin:0 0">Actions</div>
<svg style="left:396.2px;top:357.8px" width="6" height="4" viewBox="0 0 6 4"><path d="M0.3 0.3L2.6 2.9L4.9 0.3" fill="none" stroke="#555" stroke-width="0.7"/></svg>
<div class="a" style="left:417.1px;top:350.4px;width:24.7px;height:17.0px;background:#f7f7f7;border:0.8px solid #dedede;border-radius:0px"></div>
<div class="a" style="left:424.10px;top:353.07px;font-size:7.00px;color:#777;transform:scaleX(0.950);transform-origin:0 0">Edit</div>
<div class="a" style="left:446.6px;top:350.4px;width:28.3px;height:17.0px;background:#6b6b70;border:0.8px solid #5a5a5f;border-radius:1px"></div>
<div class="a" style="left:453.30px;top:353.07px;font-size:7.00px;color:#fff;font-weight:bold;transform:scaleX(0.900);transform-origin:0 0">Save</div>
<div class="a" style="left:484.1px;top:350.4px;width:41.7px;height:17.0px;background:#f7f7f7;border:0.8px solid #dedede;border-radius:0px"></div>
<svg style="left:489.8px;top:354.2px" width="10" height="10" viewBox="0 0 10 10"><path d="M0.5 9.3V0.4H3.6L5.8 2.6V4.8" fill="none" stroke="#666" stroke-width="0.7"/><path d="M3.6 0.4V2.6H5.8" fill="none" stroke="#666" stroke-width="0.6"/><path d="M3 6.2L4.6 8.6M4.6 6.2L3 8.6M5.6 5.8V8.6M8.6 6.4C7.6 5.9 6.8 6.4 7.4 7.1C8 7.8 7.6 8.6 6.6 8.4" fill="none" stroke="#666" stroke-width="0.6"/></svg>
<div class="a" style="left:501.50px;top:353.07px;font-size:7.00px;color:#666;transform:scaleX(0.900);transform-origin:0 0">Export</div>
<div class="a" style="left:1853.5px;top:350.4px;width:38.0px;height:17.0px;background:#f7f7f7;border:0.8px solid #e4e4e4;border-radius:0px"></div>
<svg style="left:1859.7px;top:354.8px" width="9" height="8" viewBox="0 0 9 8"><rect x="0.4" y="0.4" width="7.6" height="7.2" fill="none" stroke="#aaa" stroke-width="0.7"/><path d="M2.2 2.6L3.6 1.4M2.2 2.6L3.6 3.6M2.4 2.6C5 2.6 6 3.6 6 5.6" fill="none" stroke="#aaa" stroke-width="0.6"/></svg>
<div class="a" style="left:1870.90px;top:352.77px;font-size:7.00px;color:#9a9a9a;transform:scaleX(0.880);transform-origin:0 0">Reset</div>
<svg style="left:142.9px;top:383.9px" width="4" height="6" viewBox="0 0 4 6"><path d="M0 0L3.6 2.8L0 5.6Z" fill="#3a3a3a"/></svg>
<div class="a" style="left:157.9px;top:377.5px;width:44.5px;height:17.9px;border:0.8px solid #e6e6e6;background:#fff"></div>
<div class="a" style="left:157.9px;top:377.5px;width:17.9px;height:17.9px;background:#2bbd79"></div>
<svg style="left:162.4px;top:382.2px" width="10" height="9" viewBox="0 0 10 9"><path d="M0.5 0.5H9.3L5.9 4.3V8.5L3.9 7.3V4.3Z" fill="none" stroke="#fff" stroke-width="0.8" stroke-linejoin="round"/></svg>
<div class="a" style="left:180.90px;top:380.97px;font-size:7.00px;color:#444;transform:scaleX(0.940);transform-origin:0 0">Active</div>
<div class="a" style="left:207.7px;top:377.5px;width:78.7px;height:17.9px;border:0.8px solid #e6e6e6;background:#fff"></div>
<div class="a" style="left:207.7px;top:377.5px;width:23.7px;height:17.9px;background:#2f7fbf"></div>
<svg style="left:213.6px;top:382.4px" width="7" height="8.5" viewBox="0 0 7 8.5"><path d="M6.4 0.5H0.6L3.6 4.2L0.6 8H6.4" fill="none" stroke="#fff" stroke-width="0.8"/></svg>
<div class="a" style="left:223.70px;top:380.97px;font-size:7.00px;color:#fff;transform:scaleX(0.950);transform-origin:0 0">3</div>
<div class="a" style="left:236.10px;top:380.97px;font-size:7.00px;color:#444;transform:scaleX(0.880);transform-origin:0 0">Size, Free, Used</div>
<div class="a" style="left:131.3px;top:400.6px;width:1764.3999999999999px;height:44.599999999999966px;background:#f3f3f3;border-bottom:0.9px solid #dedede"></div>
<div class="a" style="left:161.5px;top:400.6px;width:108.0px;height:21.8px;border-left:0.8px solid #e0e0e0;border-bottom:0.8px solid #e0e0e0"></div>
<div class="a" style="left:197.68px;top:403.70px;font-size:7.20px;color:#1e1e1e;font-weight:bold;transform:scaleX(0.900);transform-origin:0 0">Information</div>
<div class="a" style="left:269.5px;top:400.6px;width:289.0px;height:21.8px;border-left:0.8px solid #e0e0e0;border-bottom:0.8px solid #e0e0e0"></div>
<div class="a" style="left:396.18px;top:403.70px;font-size:7.20px;color:#1e1e1e;font-weight:bold;transform:scaleX(0.900);transform-origin:0 0">Information</div>
<div class="a" style="left:558.5px;top:400.6px;width:133.1px;height:21.8px;border-left:0.8px solid #e0e0e0;border-bottom:0.8px solid #e0e0e0"></div>
<div class="a" style="left:609.38px;top:403.70px;font-size:7.20px;color:#1e1e1e;font-weight:bold;transform:scaleX(0.900);transform-origin:0 0">Usage (%)</div>
<div class="a" style="left:691.6px;top:400.6px;width:256.9px;height:21.8px;border-left:0.8px solid #e0e0e0;border-bottom:0.8px solid #e0e0e0"></div>
<div class="a" style="left:805.47px;top:403.70px;font-size:7.20px;color:#1e1e1e;font-weight:bold;transform:scaleX(0.900);transform-origin:0 0">Size (MB)</div>
<div class="a" style="left:948.5px;top:400.6px;width:191.9px;height:21.8px;border-left:0.8px solid #e0e0e0;border-bottom:0.8px solid #e0e0e0"></div>
<div class="a" style="left:1027.72px;top:403.70px;font-size:7.20px;color:#1e1e1e;font-weight:bold;transform:scaleX(0.900);transform-origin:0 0">Monitoring</div>
<div class="a" style="left:1140.4px;top:400.6px;width:0.8px;height:44.6px;background:#e0e0e0"></div>
<div class="a" style="left:161.5px;top:422.4px;width:0.8px;height:22.8px;background:#e0e0e0"></div>
<div class="a" style="left:166.30px;top:425.60px;font-size:7.20px;color:#1e1e1e;font-weight:bold;transform:scaleX(0.900);transform-origin:0 0">Tablespace</div>
<div class="a" style="left:269.5px;top:422.4px;width:0.8px;height:22.8px;background:#e0e0e0"></div>
<div class="a" style="left:274.30px;top:425.60px;font-size:7.20px;color:#1e1e1e;font-weight:bold;transform:scaleX(0.900);transform-origin:0 0">Type</div>
<div class="a" style="left:318.6px;top:422.4px;width:0.8px;height:22.8px;background:#e0e0e0"></div>
<div class="a" style="left:323.40px;top:425.60px;font-size:7.20px;color:#1e1e1e;font-weight:bold;transform:scaleX(0.900);transform-origin:0 0">Location</div>
<div class="a" style="left:357.6px;top:422.4px;width:0.8px;height:22.8px;background:#e0e0e0"></div>
<div class="a" style="left:362.40px;top:425.60px;font-size:7.20px;color:#1e1e1e;font-weight:bold;transform:scaleX(0.900);transform-origin:0 0">Datafiles</div>
<div class="a" style="left:401.8px;top:422.4px;width:0.8px;height:22.8px;background:#e0e0e0"></div>
<div class="a" style="left:406.60px;top:425.60px;font-size:7.20px;color:#1e1e1e;font-weight:bold;transform:scaleX(0.900);transform-origin:0 0">A...</div>
<div class="a" style="left:424.4px;top:422.4px;width:0.8px;height:22.8px;background:#e0e0e0"></div>
<div class="a" style="left:429.20px;top:425.60px;font-size:7.20px;color:#1e1e1e;font-weight:bold;transform:scaleX(0.900);transform-origin:0 0">Block Size</div>
<div class="a" style="left:469.5px;top:422.4px;width:0.8px;height:22.8px;background:#e0e0e0"></div>
<div class="a" style="left:474.30px;top:425.60px;font-size:7.20px;color:#1e1e1e;font-weight:bold;transform:scaleX(0.900);transform-origin:0 0">Description</div>
<div class="a" style="left:558.5px;top:422.4px;width:0.8px;height:22.8px;background:#e0e0e0"></div>
<div class="a" style="left:563.30px;top:425.60px;font-size:7.20px;color:#1e1e1e;font-weight:bold;transform:scaleX(0.900);transform-origin:0 0">Used</div>
<div class="a" style="left:596.8px;top:422.4px;width:0.8px;height:22.8px;background:#e0e0e0"></div>
<div class="a" style="left:613.94px;top:425.60px;font-size:7.20px;color:#1e1e1e;font-weight:bold;transform:scaleX(0.900);transform-origin:0 0">%</div>
<div class="a" style="left:624.3px;top:422.4px;width:0.8px;height:22.8px;background:#e0e0e0"></div>
<div class="a" style="left:629.10px;top:425.60px;font-size:7.20px;color:#1e1e1e;font-weight:bold;transform:scaleX(0.900);transform-origin:0 0">Max siz...</div>
<div class="a" style="left:665.6px;top:422.4px;width:0.8px;height:22.8px;background:#e0e0e0"></div>
<div class="a" style="left:681.24px;top:425.60px;font-size:7.20px;color:#1e1e1e;font-weight:bold;transform:scaleX(0.900);transform-origin:0 0">%</div>
<div class="a" style="left:691.6px;top:422.4px;width:0.8px;height:22.8px;background:#e0e0e0"></div>
<div class="a" style="left:734.96px;top:425.60px;font-size:7.20px;color:#1e1e1e;font-weight:bold;transform:scaleX(0.900);transform-origin:0 0">Used</div>
<div class="a" style="left:755.4px;top:422.4px;width:0.8px;height:22.8px;background:#e0e0e0"></div>
<div class="a" style="left:797.01px;top:425.60px;font-size:7.20px;color:#1e1e1e;font-weight:bold;transform:scaleX(0.900);transform-origin:0 0">Free</div>
<div class="a" style="left:815.3px;top:422.4px;width:0.8px;height:22.8px;background:#e0e0e0"></div>
<div class="a" style="left:862.83px;top:425.60px;font-size:7.20px;color:#1e1e1e;font-weight:bold;transform:scaleX(0.900);transform-origin:0 0">Size</div>
<div class="a" style="left:880.4px;top:422.4px;width:0.8px;height:22.8px;background:#e0e0e0"></div>
<div class="a" style="left:916.53px;top:425.60px;font-size:7.20px;color:#1e1e1e;font-weight:bold;transform:scaleX(0.900);transform-origin:0 0">Max Size</div>
<div class="a" style="left:948.5px;top:422.4px;width:0.8px;height:22.8px;background:#e0e0e0"></div>
<div class="a" style="left:953.30px;top:425.60px;font-size:7.20px;color:#1e1e1e;font-weight:bold;transform:scaleX(0.900);transform-origin:0 0">Monitor</div>
<div class="a" style="left:984.4px;top:422.4px;width:0.8px;height:22.8px;background:#e0e0e0"></div>
<div class="a" style="left:989.20px;top:425.60px;font-size:7.20px;color:#1e1e1e;font-weight:bold;transform:scaleX(0.900);transform-origin:0 0">Serious ...</div>
<div class="a" style="left:1027.8px;top:422.4px;width:0.8px;height:22.8px;background:#e0e0e0"></div>
<div class="a" style="left:1032.60px;top:425.60px;font-size:7.20px;color:#1e1e1e;font-weight:bold;transform:scaleX(0.900);transform-origin:0 0">Critical (%)</div>
<div class="a" style="left:1075.3px;top:422.4px;width:0.8px;height:22.8px;background:#e0e0e0"></div>
<div class="a" style="left:1091.60px;top:425.60px;font-size:7.20px;color:#1e1e1e;font-weight:bold;transform:scaleX(0.900);transform-origin:0 0">Last check</div>
<div class="a" style="left:131.3px;top:445.8px;width:138.2px;height:18.0px;background:#eaf2fc;border-bottom:0.8px solid #ececec"></div>
<div class="a" style="left:269.5px;top:445.8px;width:871.7px;height:18.0px;background:#eaf2fc;border-bottom:0.8px solid #ececec"></div>
<div class="a" style="left:166.30px;top:446.17px;font-size:7.00px;color:#3c3c3c;transform:scaleX(0.890);transform-origin:0 0">POSITION_IDX</div>
<div class="a" style="left:274.30px;top:446.17px;font-size:7.00px;color:#3c3c3c;transform:scaleX(0.890);transform-origin:0 0">PERMANENT</div>
<div class="a" style="left:323.40px;top:446.17px;font-size:7.00px;color:#3c3c3c;transform:scaleX(0.890);transform-origin:0 0">/mnt/ssd</div>
<div class="a" style="left:362.40px;top:446.17px;font-size:7.00px;color:#3c3c3c;transform:scaleX(0.890);transform-origin:0 0">25</div>
<div class="a" style="left:406.60px;top:446.17px;font-size:7.00px;color:#3c3c3c;transform:scaleX(0.890);transform-origin:0 0">Yes</div>
<div class="a" style="left:429.20px;top:446.17px;font-size:7.00px;color:#3c3c3c;transform:scaleX(0.890);transform-origin:0 0">8192</div>
<div class="a" style="left:563.3px;top:448.2px;width:22.6px;height:8.6px;border-radius:1.5px;background:#fdfbfd;box-shadow:inset 0 0 0 0.7px #e6dfe6;overflow:hidden"><div style="position:absolute;left:0;top:0;bottom:0;width:99.62%;background:#74747b;border-radius:1px"></div></div>
<div class="a" style="left:604.11px;top:446.17px;font-size:7.00px;color:#3c3c3c;transform:scaleX(0.890);transform-origin:0 0">99.62</div>
<div class="a" style="left:629.1px;top:448.2px;width:22.6px;height:8.6px;border-radius:1.5px;background:#fdfbfd;box-shadow:inset 0 0 0 0.7px #e6dfe6;overflow:hidden"><div style="position:absolute;left:0;top:0;bottom:0;width:89.81%;background:#74747b;border-radius:1px"></div></div>
<div class="a" style="left:671.41px;top:446.17px;font-size:7.00px;color:#3c3c3c;transform:scaleX(0.890);transform-origin:0 0">89.81</div>
<div class="a" style="left:719.62px;top:446.17px;font-size:7.00px;color:#3c3c3c;transform:scaleX(0.890);transform-origin:0 0">481,920.00</div>
<div class="a" style="left:786.91px;top:446.17px;font-size:7.00px;color:#3c3c3c;transform:scaleX(0.890);transform-origin:0 0">1,811.00</div>
<div class="a" style="left:844.62px;top:446.17px;font-size:7.00px;color:#3c3c3c;transform:scaleX(0.890);transform-origin:0 0">483,756.00</div>
<div class="a" style="left:912.72px;top:446.17px;font-size:7.00px;color:#3c3c3c;transform:scaleX(0.890);transform-origin:0 0">536,576.00</div>
<div class="a" style="left:953.30px;top:446.17px;font-size:7.00px;color:#3c3c3c;transform:scaleX(0.890);transform-origin:0 0">Yes</div>
<div class="a" style="left:1016.27px;top:446.17px;font-size:7.00px;color:#3c3c3c;transform:scaleX(0.890);transform-origin:0 0">92</div>
<div class="a" style="left:1063.77px;top:446.17px;font-size:7.00px;color:#3c3c3c;transform:scaleX(0.890);transform-origin:0 0">95</div>
<div class="a" style="left:1084.33px;top:446.17px;font-size:7.00px;color:#3c3c3c;transform:scaleX(0.890);transform-origin:0 0">10.11.2020 18:45</div>
<div class="a" style="left:131.3px;top:463.8px;width:138.2px;height:18.0px;background:#fff;border-bottom:0.8px solid #ececec"></div>
<div class="a" style="left:269.5px;top:463.8px;width:871.7px;height:18.0px;background:#fff;border-bottom:0.8px solid #ececec"></div>
<div class="a" style="left:166.30px;top:464.17px;font-size:7.00px;color:#3c3c3c;transform:scaleX(0.890);transform-origin:0 0">POSITION_DAT</div>
<div class="a" style="left:274.30px;top:464.17px;font-size:7.00px;color:#3c3c3c;transform:scaleX(0.890);transform-origin:0 0">PERMANENT</div>
<div class="a" style="left:323.40px;top:464.17px;font-size:7.00px;color:#3c3c3c;transform:scaleX(0.890);transform-origin:0 0">/mnt/ssd</div>
<div class="a" style="left:362.40px;top:464.17px;font-size:7.00px;color:#3c3c3c;transform:scaleX(0.890);transform-origin:0 0">15</div>
<div class="a" style="left:406.60px;top:464.17px;font-size:7.00px;color:#3c3c3c;transform:scaleX(0.890);transform-origin:0 0">Yes</div>
<div class="a" style="left:429.20px;top:464.17px;font-size:7.00px;color:#3c3c3c;transform:scaleX(0.890);transform-origin:0 0">8192</div>
<div class="a" style="left:563.3px;top:466.2px;width:22.6px;height:8.6px;border-radius:1.5px;background:#fdfbfd;box-shadow:inset 0 0 0 0.7px #e6dfe6;overflow:hidden"><div style="position:absolute;left:0;top:0;bottom:0;width:98.84%;background:#74747b;border-radius:1px"></div></div>
<div class="a" style="left:604.11px;top:464.17px;font-size:7.00px;color:#3c3c3c;transform:scaleX(0.890);transform-origin:0 0">98.84</div>
<div class="a" style="left:629.1px;top:466.2px;width:22.6px;height:8.6px;border-radius:1.5px;background:#fdfbfd;box-shadow:inset 0 0 0 0.7px #e6dfe6;overflow:hidden"><div style="position:absolute;left:0;top:0;bottom:0;width:86.36%;background:#74747b;border-radius:1px"></div></div>
<div class="a" style="left:671.41px;top:464.17px;font-size:7.00px;color:#3c3c3c;transform:scaleX(0.890);transform-origin:0 0">86.36</div>
<div class="a" style="left:719.62px;top:464.17px;font-size:7.00px;color:#3c3c3c;transform:scaleX(0.890);transform-origin:0 0">286,528.00</div>
<div class="a" style="left:786.45px;top:464.17px;font-size:7.00px;color:#3c3c3c;transform:scaleX(0.890);transform-origin:0 0">3,341.00</div>
<div class="a" style="left:844.62px;top:464.17px;font-size:7.00px;color:#3c3c3c;transform:scaleX(0.890);transform-origin:0 0">289,884.00</div>
<div class="a" style="left:912.72px;top:464.17px;font-size:7.00px;color:#3c3c3c;transform:scaleX(0.890);transform-origin:0 0">331,776.00</div>
<div class="a" style="left:953.30px;top:464.17px;font-size:7.00px;color:#3c3c3c;transform:scaleX(0.890);transform-origin:0 0">Yes</div>
<div class="a" style="left:1016.27px;top:464.17px;font-size:7.00px;color:#3c3c3c;transform:scaleX(0.890);transform-origin:0 0">92</div>
<div class="a" style="left:1063.77px;top:464.17px;font-size:7.00px;color:#3c3c3c;transform:scaleX(0.890);transform-origin:0 0">95</div>
<div class="a" style="left:1084.33px;top:464.17px;font-size:7.00px;color:#3c3c3c;transform:scaleX(0.890);transform-origin:0 0">10.11.2020 18:45</div>
<div class="a" style="left:131.3px;top:481.8px;width:138.2px;height:18.0px;background:#fff;border-bottom:0.8px solid #ececec"></div>
<div class="a" style="left:269.5px;top:481.8px;width:871.7px;height:18.0px;background:#fff;border-bottom:0.8px solid #ececec"></div>
<div class="a" style="left:166.30px;top:482.17px;font-size:7.00px;color:#3c3c3c;transform:scaleX(0.890);transform-origin:0 0">TRACK_IDX</div>
<div class="a" style="left:274.30px;top:482.17px;font-size:7.00px;color:#3c3c3c;transform:scaleX(0.890);transform-origin:0 0">PERMANENT</div>
<div class="a" style="left:323.40px;top:482.17px;font-size:7.00px;color:#3c3c3c;transform:scaleX(0.890);transform-origin:0 0">/mnt/ssd</div>
<div class="a" style="left:362.40px;top:482.17px;font-size:7.00px;color:#3c3c3c;transform:scaleX(0.890);transform-origin:0 0">1</div>
<div class="a" style="left:406.60px;top:482.17px;font-size:7.00px;color:#3c3c3c;transform:scaleX(0.890);transform-origin:0 0">Yes</div>
<div class="a" style="left:429.20px;top:482.17px;font-size:7.00px;color:#3c3c3c;transform:scaleX(0.890);transform-origin:0 0">8192</div>
<div class="a" style="left:563.3px;top:484.2px;width:22.6px;height:8.6px;border-radius:1.5px;background:#fdfbfd;box-shadow:inset 0 0 0 0.7px #e6dfe6;overflow:hidden"><div style="position:absolute;left:0;top:0;bottom:0;width:94.82%;background:#74747b;border-radius:1px"></div></div>
<div class="a" style="left:604.11px;top:482.17px;font-size:7.00px;color:#3c3c3c;transform:scaleX(0.890);transform-origin:0 0">94.82</div>
<div class="a" style="left:629.1px;top:484.2px;width:22.6px;height:8.6px;border-radius:1.5px;background:#fdfbfd;box-shadow:inset 0 0 0 0.7px #e6dfe6;overflow:hidden"><div style="position:absolute;left:0;top:0;bottom:0;width:77.32%;background:#74747b;border-radius:1px"></div></div>
<div class="a" style="left:671.41px;top:482.17px;font-size:7.00px;color:#3c3c3c;transform:scaleX(0.890);transform-origin:0 0">77.32</div>
<div class="a" style="left:723.08px;top:482.17px;font-size:7.00px;color:#3c3c3c;transform:scaleX(0.890);transform-origin:0 0">15,834.00</div>
<div class="a" style="left:791.64px;top:482.17px;font-size:7.00px;color:#3c3c3c;transform:scaleX(0.890);transform-origin:0 0">865.00</div>
<div class="a" style="left:848.08px;top:482.17px;font-size:7.00px;color:#3c3c3c;transform:scaleX(0.890);transform-origin:0 0">16,700.00</div>
<div class="a" style="left:916.18px;top:482.17px;font-size:7.00px;color:#3c3c3c;transform:scaleX(0.890);transform-origin:0 0">20,480.00</div>
<div class="a" style="left:953.30px;top:482.17px;font-size:7.00px;color:#3c3c3c;transform:scaleX(0.890);transform-origin:0 0">Yes</div>
<div class="a" style="left:1016.27px;top:482.17px;font-size:7.00px;color:#3c3c3c;transform:scaleX(0.890);transform-origin:0 0">90</div>
<div class="a" style="left:1063.77px;top:482.17px;font-size:7.00px;color:#3c3c3c;transform:scaleX(0.890);transform-origin:0 0">95</div>
<div class="a" style="left:1084.33px;top:482.17px;font-size:7.00px;color:#3c3c3c;transform:scaleX(0.890);transform-origin:0 0">10.11.2020 18:45</div>
<div class="a" style="left:131.3px;top:499.8px;width:138.2px;height:18.0px;background:#fff;border-bottom:0.8px solid #ececec"></div>
<div class="a" style="left:269.5px;top:499.8px;width:871.7px;height:18.0px;background:#fff;border-bottom:0.8px solid #ececec"></div>
<div class="a" style="left:166.30px;top:500.17px;font-size:7.00px;color:#3c3c3c;transform:scaleX(0.890);transform-origin:0 0">TRACK_DAT</div>
<div class="a" style="left:274.30px;top:500.17px;font-size:7.00px;color:#3c3c3c;transform:scaleX(0.890);transform-origin:0 0">PERMANENT</div>
<div class="a" style="left:323.40px;top:500.17px;font-size:7.00px;color:#3c3c3c;transform:scaleX(0.890);transform-origin:0 0">/mnt/ssd</div>
<div class="a" style="left:362.40px;top:500.17px;font-size:7.00px;color:#3c3c3c;transform:scaleX(0.890);transform-origin:0 0">2</div>
<div class="a" style="left:406.60px;top:500.17px;font-size:7.00px;color:#3c3c3c;transform:scaleX(0.890);transform-origin:0 0">Yes</div>
<div class="a" style="left:429.20px;top:500.17px;font-size:7.00px;color:#3c3c3c;transform:scaleX(0.890);transform-origin:0 0">8192</div>
<div class="a" style="left:563.3px;top:502.2px;width:22.6px;height:8.6px;border-radius:1.5px;background:#fdfbfd;box-shadow:inset 0 0 0 0.7px #e6dfe6;overflow:hidden"><div style="position:absolute;left:0;top:0;bottom:0;width:95.64%;background:#74747b;border-radius:1px"></div></div>
<div class="a" style="left:604.11px;top:500.17px;font-size:7.00px;color:#3c3c3c;transform:scaleX(0.890);transform-origin:0 0">95.64</div>
<div class="a" style="left:629.1px;top:502.2px;width:22.6px;height:8.6px;border-radius:1.5px;background:#fdfbfd;box-shadow:inset 0 0 0 0.7px #e6dfe6;overflow:hidden"><div style="position:absolute;left:0;top:0;bottom:0;width:65.57%;background:#74747b;border-radius:1px"></div></div>
<div class="a" style="left:671.41px;top:500.17px;font-size:7.00px;color:#3c3c3c;transform:scaleX(0.890);transform-origin:0 0">65.57</div>
<div class="a" style="left:723.08px;top:500.17px;font-size:7.00px;color:#3c3c3c;transform:scaleX(0.890);transform-origin:0 0">26,856.00</div>
<div class="a" style="left:786.45px;top:500.17px;font-size:7.00px;color:#3c3c3c;transform:scaleX(0.890);transform-origin:0 0">1,222.00</div>
<div class="a" style="left:848.08px;top:500.17px;font-size:7.00px;color:#3c3c3c;transform:scaleX(0.890);transform-origin:0 0">28,080.00</div>
<div class="a" style="left:916.18px;top:500.17px;font-size:7.00px;color:#3c3c3c;transform:scaleX(0.890);transform-origin:0 0">40,960.00</div>
<div class="a" style="left:953.30px;top:500.17px;font-size:7.00px;color:#3c3c3c;transform:scaleX(0.890);transform-origin:0 0">Yes</div>
<div class="a" style="left:1016.27px;top:500.17px;font-size:7.00px;color:#3c3c3c;transform:scaleX(0.890);transform-origin:0 0">90</div>
<div class="a" style="left:1063.77px;top:500.17px;font-size:7.00px;color:#3c3c3c;transform:scaleX(0.890);transform-origin:0 0">95</div>
<div class="a" style="left:1084.33px;top:500.17px;font-size:7.00px;color:#3c3c3c;transform:scaleX(0.890);transform-origin:0 0">10.11.2020 18:45</div>
<div class="a" style="left:131.3px;top:517.8px;width:138.2px;height:18.0px;background:#fff;border-bottom:0.8px solid #ececec"></div>
<div class="a" style="left:269.5px;top:517.8px;width:871.7px;height:18.0px;background:#fff;border-bottom:0.8px solid #ececec"></div>
<div class="a" style="left:166.30px;top:518.17px;font-size:7.00px;color:#3c3c3c;transform:scaleX(0.890);transform-origin:0 0">USERS</div>
<div class="a" style="left:274.30px;top:518.17px;font-size:7.00px;color:#3c3c3c;transform:scaleX(0.890);transform-origin:0 0">PERMANENT</div>
<div class="a" style="left:323.40px;top:518.17px;font-size:7.00px;color:#3c3c3c;transform:scaleX(0.890);transform-origin:0 0">/mnt/ssd</div>
<div class="a" style="left:362.40px;top:518.17px;font-size:7.00px;color:#3c3c3c;transform:scaleX(0.890);transform-origin:0 0">1</div>
<div class="a" style="left:406.60px;top:518.17px;font-size:7.00px;color:#3c3c3c;transform:scaleX(0.890);transform-origin:0 0">Yes</div>
<div class="a" style="left:429.20px;top:518.17px;font-size:7.00px;color:#3c3c3c;transform:scaleX(0.890);transform-origin:0 0">8192</div>
<div class="a" style="left:563.3px;top:520.2px;width:22.6px;height:8.6px;border-radius:1.5px;background:#fdfbfd;box-shadow:inset 0 0 0 0.7px #e6dfe6;overflow:hidden"><div style="position:absolute;left:0;top:0;bottom:0;width:89.64%;background:#74747b;border-radius:1px"></div></div>
<div class="a" style="left:604.11px;top:518.17px;font-size:7.00px;color:#3c3c3c;transform:scaleX(0.890);transform-origin:0 0">89.64</div>
<div class="a" style="left:629.1px;top:520.2px;width:22.6px;height:8.6px;border-radius:1.5px;background:#fdfbfd;box-shadow:inset 0 0 0 0.7px #e6dfe6;overflow:hidden"><div style="position:absolute;left:0;top:0;bottom:0;width:31.01%;background:#74747b;border-radius:1px"></div></div>
<div class="a" style="left:671.41px;top:518.17px;font-size:7.00px;color:#3c3c3c;transform:scaleX(0.890);transform-origin:0 0">31.01</div>
<div class="a" style="left:726.55px;top:518.17px;font-size:7.00px;color:#3c3c3c;transform:scaleX(0.890);transform-origin:0 0">1,588.00</div>
<div class="a" style="left:791.64px;top:518.17px;font-size:7.00px;color:#3c3c3c;transform:scaleX(0.890);transform-origin:0 0">182.00</div>
<div class="a" style="left:851.55px;top:518.17px;font-size:7.00px;color:#3c3c3c;transform:scaleX(0.890);transform-origin:0 0">1,771.00</div>
<div class="a" style="left:919.65px;top:518.17px;font-size:7.00px;color:#3c3c3c;transform:scaleX(0.890);transform-origin:0 0">5,120.00</div>
<div class="a" style="left:953.30px;top:518.17px;font-size:7.00px;color:#3c3c3c;transform:scaleX(0.890);transform-origin:0 0">Yes</div>
<div class="a" style="left:1016.27px;top:518.17px;font-size:7.00px;color:#3c3c3c;transform:scaleX(0.890);transform-origin:0 0">90</div>
<div class="a" style="left:1063.77px;top:518.17px;font-size:7.00px;color:#3c3c3c;transform:scaleX(0.890);transform-origin:0 0">95</div>
<div class="a" style="left:1084.33px;top:518.17px;font-size:7.00px;color:#3c3c3c;transform:scaleX(0.890);transform-origin:0 0">10.11.2020 18:45</div>
<div class="a" style="left:131.3px;top:535.8px;width:138.2px;height:18.0px;background:#fff;border-bottom:0.8px solid #ececec"></div>
<div class="a" style="left:269.5px;top:535.8px;width:871.7px;height:18.0px;background:#fff;border-bottom:0.8px solid #ececec"></div>
<div class="a" style="left:166.30px;top:536.17px;font-size:7.00px;color:#3c3c3c;transform:scaleX(0.890);transform-origin:0 0">SYSAUX</div>
<div class="a" style="left:274.30px;top:536.17px;font-size:7.00px;color:#3c3c3c;transform:scaleX(0.890);transform-origin:0 0">PERMANENT</div>
<div class="a" style="left:323.40px;top:536.17px;font-size:7.00px;color:#3c3c3c;transform:scaleX(0.890);transform-origin:0 0">/mnt/ssd</div>
<div class="a" style="left:362.40px;top:536.17px;font-size:7.00px;color:#3c3c3c;transform:scaleX(0.890);transform-origin:0 0">1</div>
<div class="a" style="left:406.60px;top:536.17px;font-size:7.00px;color:#3c3c3c;transform:scaleX(0.890);transform-origin:0 0">Yes</div>
<div class="a" style="left:429.20px;top:536.17px;font-size:7.00px;color:#3c3c3c;transform:scaleX(0.890);transform-origin:0 0">8192</div>
<div class="a" style="left:563.3px;top:538.2px;width:22.6px;height:8.6px;border-radius:1.5px;background:#fdfbfd;box-shadow:inset 0 0 0 0.7px #e6dfe6;overflow:hidden"><div style="position:absolute;left:0;top:0;bottom:0;width:94.87%;background:#74747b;border-radius:1px"></div></div>
<div class="a" style="left:604.11px;top:536.17px;font-size:7.00px;color:#3c3c3c;transform:scaleX(0.890);transform-origin:0 0">94.87</div>
<div class="a" style="left:629.1px;top:538.2px;width:22.6px;height:8.6px;border-radius:1.5px;background:#fdfbfd;box-shadow:inset 0 0 0 0.7px #e6dfe6;overflow:hidden"><div style="position:absolute;left:0;top:0;bottom:0;width:21.68%;background:#74747b;border-radius:1px"></div></div>
<div class="a" style="left:671.41px;top:536.17px;font-size:7.00px;color:#3c3c3c;transform:scaleX(0.890);transform-origin:0 0">21.68</div>
<div class="a" style="left:726.55px;top:536.17px;font-size:7.00px;color:#3c3c3c;transform:scaleX(0.890);transform-origin:0 0">2,220.00</div>
<div class="a" style="left:792.11px;top:536.17px;font-size:7.00px;color:#3c3c3c;transform:scaleX(0.890);transform-origin:0 0">119.00</div>
<div class="a" style="left:851.55px;top:536.17px;font-size:7.00px;color:#3c3c3c;transform:scaleX(0.890);transform-origin:0 0">2,340.00</div>
<div class="a" style="left:916.18px;top:536.17px;font-size:7.00px;color:#3c3c3c;transform:scaleX(0.890);transform-origin:0 0">10,240.00</div>
<div class="a" style="left:953.30px;top:536.17px;font-size:7.00px;color:#3c3c3c;transform:scaleX(0.890);transform-origin:0 0">Yes</div>
<div class="a" style="left:1016.27px;top:536.17px;font-size:7.00px;color:#3c3c3c;transform:scaleX(0.890);transform-origin:0 0">90</div>
<div class="a" style="left:1063.77px;top:536.17px;font-size:7.00px;color:#3c3c3c;transform:scaleX(0.890);transform-origin:0 0">95</div>
<div class="a" style="left:1084.33px;top:536.17px;font-size:7.00px;color:#3c3c3c;transform:scaleX(0.890);transform-origin:0 0">10.11.2020 18:45</div>
<div class="a" style="left:131.3px;top:553.8px;width:138.2px;height:18.0px;background:#fff;border-bottom:0.8px solid #ececec"></div>
<div class="a" style="left:269.5px;top:553.8px;width:871.7px;height:18.0px;background:#fff;border-bottom:0.8px solid #ececec"></div>
<div class="a" style="left:166.30px;top:554.17px;font-size:7.00px;color:#3c3c3c;transform:scaleX(0.890);transform-origin:0 0">DMS_DATA</div>
<div class="a" style="left:274.30px;top:554.17px;font-size:7.00px;color:#3c3c3c;transform:scaleX(0.890);transform-origin:0 0">PERMANENT</div>
<div class="a" style="left:323.40px;top:554.17px;font-size:7.00px;color:#3c3c3c;transform:scaleX(0.890);transform-origin:0 0">/mnt/ssd</div>
<div class="a" style="left:362.40px;top:554.17px;font-size:7.00px;color:#3c3c3c;transform:scaleX(0.890);transform-origin:0 0">1</div>
<div class="a" style="left:406.60px;top:554.17px;font-size:7.00px;color:#3c3c3c;transform:scaleX(0.890);transform-origin:0 0">Yes</div>
<div class="a" style="left:429.20px;top:554.17px;font-size:7.00px;color:#3c3c3c;transform:scaleX(0.890);transform-origin:0 0">8192</div>
<div class="a" style="left:563.3px;top:556.2px;width:22.6px;height:8.6px;border-radius:1.5px;background:#fdfbfd;box-shadow:inset 0 0 0 0.7px #e6dfe6;overflow:hidden"><div style="position:absolute;left:0;top:0;bottom:0;width:21.32%;background:#74747b;border-radius:1px"></div></div>
<div class="a" style="left:604.11px;top:554.17px;font-size:7.00px;color:#3c3c3c;transform:scaleX(0.890);transform-origin:0 0">21.32</div>
<div class="a" style="left:629.1px;top:556.2px;width:22.6px;height:8.6px;border-radius:1.5px;background:#fdfbfd;box-shadow:inset 0 0 0 0.7px #e6dfe6;overflow:hidden"><div style="position:absolute;left:0;top:0;bottom:0;width:15.23%;background:#74747b;border-radius:1px"></div></div>
<div class="a" style="left:671.41px;top:554.17px;font-size:7.00px;color:#3c3c3c;transform:scaleX(0.890);transform-origin:0 0">15.23</div>
<div class="a" style="left:726.55px;top:554.17px;font-size:7.00px;color:#3c3c3c;transform:scaleX(0.890);transform-origin:0 0">1,092.00</div>
<div class="a" style="left:786.45px;top:554.17px;font-size:7.00px;color:#3c3c3c;transform:scaleX(0.890);transform-origin:0 0">4,027.00</div>
<div class="a" style="left:851.55px;top:554.17px;font-size:7.00px;color:#3c3c3c;transform:scaleX(0.890);transform-origin:0 0">5,120.00</div>
<div class="a" style="left:919.65px;top:554.17px;font-size:7.00px;color:#3c3c3c;transform:scaleX(0.890);transform-origin:0 0">7,168.00</div>
<div class="a" style="left:953.30px;top:554.17px;font-size:7.00px;color:#3c3c3c;transform:scaleX(0.890);transform-origin:0 0">Yes</div>
<div class="a" style="left:1016.27px;top:554.17px;font-size:7.00px;color:#3c3c3c;transform:scaleX(0.890);transform-origin:0 0">90</div>
<div class="a" style="left:1063.77px;top:554.17px;font-size:7.00px;color:#3c3c3c;transform:scaleX(0.890);transform-origin:0 0">95</div>
<div class="a" style="left:1084.33px;top:554.17px;font-size:7.00px;color:#3c3c3c;transform:scaleX(0.890);transform-origin:0 0">10.11.2020 18:45</div>
<div class="a" style="left:131.3px;top:571.8px;width:138.2px;height:18.0px;background:#fff;border-bottom:0.8px solid #ececec"></div>
<div class="a" style="left:269.5px;top:571.8px;width:871.7px;height:18.0px;background:#fff;border-bottom:0.8px solid #ececec"></div>
<div class="a" style="left:166.30px;top:572.17px;font-size:7.00px;color:#3c3c3c;transform:scaleX(0.890);transform-origin:0 0">SYSTEM</div>
<div class="a" style="left:274.30px;top:572.17px;font-size:7.00px;color:#3c3c3c;transform:scaleX(0.890);transform-origin:0 0">PERMANENT</div>
<div class="a" style="left:323.40px;top:572.17px;font-size:7.00px;color:#3c3c3c;transform:scaleX(0.890);transform-origin:0 0">/mnt/ssd</div>
<div class="a" style="left:362.40px;top:572.17px;font-size:7.00px;color:#3c3c3c;transform:scaleX(0.890);transform-origin:0 0">1</div>
<div class="a" style="left:406.60px;top:572.17px;font-size:7.00px;color:#3c3c3c;transform:scaleX(0.890);transform-origin:0 0">Yes</div>
<div class="a" style="left:429.20px;top:572.17px;font-size:7.00px;color:#3c3c3c;transform:scaleX(0.890);transform-origin:0 0">8192</div>
<div class="a" style="left:563.3px;top:574.2px;width:22.6px;height:8.6px;border-radius:1.5px;background:#fdfbfd;box-shadow:inset 0 0 0 0.7px #e6dfe6;overflow:hidden"><div style="position:absolute;left:0;top:0;bottom:0;width:99.82%;background:#74747b;border-radius:1px"></div></div>
<div class="a" style="left:604.11px;top:572.17px;font-size:7.00px;color:#3c3c3c;transform:scaleX(0.890);transform-origin:0 0">99.82</div>
<div class="a" style="left:629.1px;top:574.2px;width:22.6px;height:8.6px;border-radius:1.5px;background:#fdfbfd;box-shadow:inset 0 0 0 0.7px #e6dfe6;overflow:hidden"><div style="position:absolute;left:0;top:0;bottom:0;width:7.99%;background:#74747b;border-radius:1px"></div></div>
<div class="a" style="left:674.88px;top:572.17px;font-size:7.00px;color:#3c3c3c;transform:scaleX(0.890);transform-origin:0 0">7.99</div>
<div class="a" style="left:731.74px;top:572.17px;font-size:7.00px;color:#3c3c3c;transform:scaleX(0.890);transform-origin:0 0">819.00</div>
<div class="a" style="left:798.58px;top:572.17px;font-size:7.00px;color:#3c3c3c;transform:scaleX(0.890);transform-origin:0 0">1.00</div>
<div class="a" style="left:856.74px;top:572.17px;font-size:7.00px;color:#3c3c3c;transform:scaleX(0.890);transform-origin:0 0">820.00</div>
<div class="a" style="left:916.18px;top:572.17px;font-size:7.00px;color:#3c3c3c;transform:scaleX(0.890);transform-origin:0 0">10,240.00</div>
<div class="a" style="left:953.30px;top:572.17px;font-size:7.00px;color:#3c3c3c;transform:scaleX(0.890);transform-origin:0 0">Yes</div>
<div class="a" style="left:1016.27px;top:572.17px;font-size:7.00px;color:#3c3c3c;transform:scaleX(0.890);transform-origin:0 0">90</div>
<div class="a" style="left:1063.77px;top:572.17px;font-size:7.00px;color:#3c3c3c;transform:scaleX(0.890);transform-origin:0 0">95</div>
<div class="a" style="left:1084.33px;top:572.17px;font-size:7.00px;color:#3c3c3c;transform:scaleX(0.890);transform-origin:0 0">10.11.2020 18:45</div>
<div class="a" style="left:131.3px;top:589.8px;width:138.2px;height:18.0px;background:#fff;border-bottom:0.8px solid #ececec"></div>
<div class="a" style="left:269.5px;top:589.8px;width:871.7px;height:18.0px;background:#fff;border-bottom:0.8px solid #ececec"></div>
<div class="a" style="left:166.30px;top:590.17px;font-size:7.00px;color:#3c3c3c;transform:scaleX(0.890);transform-origin:0 0">UNDOTBS1</div>
<div class="a" style="left:274.30px;top:590.17px;font-size:7.00px;color:#3c3c3c;transform:scaleX(0.890);transform-origin:0 0">UNDO</div>
<div class="a" style="left:323.40px;top:590.17px;font-size:7.00px;color:#3c3c3c;transform:scaleX(0.890);transform-origin:0 0">/mnt/ssd</div>
<div class="a" style="left:362.40px;top:590.17px;font-size:7.00px;color:#3c3c3c;transform:scaleX(0.890);transform-origin:0 0">1</div>
<div class="a" style="left:406.60px;top:590.17px;font-size:7.00px;color:#3c3c3c;transform:scaleX(0.890);transform-origin:0 0">Yes</div>
<div class="a" style="left:429.20px;top:590.17px;font-size:7.00px;color:#3c3c3c;transform:scaleX(0.890);transform-origin:0 0">8192</div>
<div class="a" style="left:563.3px;top:592.2px;width:22.6px;height:8.6px;border-radius:1.5px;background:#fdfbfd;box-shadow:inset 0 0 0 0.7px #e6dfe6;overflow:hidden"><div style="position:absolute;left:0;top:0;bottom:0;width:4.18%;background:#74747b;border-radius:1px"></div></div>
<div class="a" style="left:607.58px;top:590.17px;font-size:7.00px;color:#3c3c3c;transform:scaleX(0.890);transform-origin:0 0">4.18</div>
<div class="a" style="left:629.1px;top:592.2px;width:22.6px;height:8.6px;border-radius:1.5px;background:#fdfbfd;box-shadow:inset 0 0 0 0.7px #e6dfe6;overflow:hidden"><div style="position:absolute;left:0;top:0;bottom:0;width:3.5%;background:#74747b;border-radius:1px"></div></div>
<div class="a" style="left:674.88px;top:590.17px;font-size:7.00px;color:#3c3c3c;transform:scaleX(0.890);transform-origin:0 0">3.50</div>
<div class="a" style="left:731.74px;top:590.17px;font-size:7.00px;color:#3c3c3c;transform:scaleX(0.890);transform-origin:0 0">537.00</div>
<div class="a" style="left:782.98px;top:590.17px;font-size:7.00px;color:#3c3c3c;transform:scaleX(0.890);transform-origin:0 0">12,312.00</div>
<div class="a" style="left:848.08px;top:590.17px;font-size:7.00px;color:#3c3c3c;transform:scaleX(0.890);transform-origin:0 0">12,850.00</div>
<div class="a" style="left:916.18px;top:590.17px;font-size:7.00px;color:#3c3c3c;transform:scaleX(0.890);transform-origin:0 0">15,360.00</div>
<div class="a" style="left:953.30px;top:590.17px;font-size:7.00px;color:#3c3c3c;transform:scaleX(0.890);transform-origin:0 0">No</div>
<div class="a" style="left:1016.27px;top:590.17px;font-size:7.00px;color:#3c3c3c;transform:scaleX(0.890);transform-origin:0 0">90</div>
<div class="a" style="left:1063.77px;top:590.17px;font-size:7.00px;color:#3c3c3c;transform:scaleX(0.890);transform-origin:0 0">95</div>
<div class="a" style="left:1084.33px;top:590.17px;font-size:7.00px;color:#3c3c3c;transform:scaleX(0.890);transform-origin:0 0">10.11.2020 18:45</div>
<div class="a" style="left:131.3px;top:607.8px;width:138.2px;height:17.1px;background:#fff;border-bottom:0.8px solid #ececec"></div>
<div class="a" style="left:269.5px;top:607.8px;width:871.7px;height:22.0px;background:#fff;border-bottom:0.8px solid #ececec"></div>
<div class="a" style="left:166.30px;top:608.17px;font-size:7.00px;color:#3c3c3c;transform:scaleX(0.890);transform-origin:0 0">TEMP</div>
<div class="a" style="left:274.30px;top:608.17px;font-size:7.00px;color:#3c3c3c;transform:scaleX(0.890);transform-origin:0 0">TEMPORARY</div>
<div class="a" style="left:323.40px;top:608.17px;font-size:7.00px;color:#3c3c3c;transform:scaleX(0.890);transform-origin:0 0">/home,</div>
<div class="a" style="left:362.40px;top:608.17px;font-size:7.00px;color:#3c3c3c;transform:scaleX(0.890);transform-origin:0 0">4</div>
<div class="a" style="left:406.60px;top:608.17px;font-size:7.00px;color:#3c3c3c;transform:scaleX(0.890);transform-origin:0 0">Yes</div>
<div class="a" style="left:429.20px;top:608.17px;font-size:7.00px;color:#3c3c3c;transform:scaleX(0.890);transform-origin:0 0">8192</div>
<div class="a" style="left:563.3px;top:610.2px;width:22.6px;height:8.6px;border-radius:1.5px;background:#fdfbfd;box-shadow:inset 0 0 0 0.7px #e6dfe6;overflow:hidden"><div style="position:absolute;left:0;top:0;bottom:0;width:0.12%;background:#74747b;border-radius:1px"></div></div>
<div class="a" style="left:607.58px;top:608.17px;font-size:7.00px;color:#3c3c3c;transform:scaleX(0.890);transform-origin:0 0">0.12</div>
<div class="a" style="left:629.1px;top:610.2px;width:22.6px;height:8.6px;border-radius:1.5px;background:#fdfbfd;box-shadow:inset 0 0 0 0.7px #e6dfe6;overflow:hidden"><div style="position:absolute;left:0;top:0;bottom:0;width:0.05%;background:#74747b;border-radius:1px"></div></div>
<div class="a" style="left:674.88px;top:608.17px;font-size:7.00px;color:#3c3c3c;transform:scaleX(0.890);transform-origin:0 0">0.05</div>
<div class="a" style="left:735.21px;top:608.17px;font-size:7.00px;color:#3c3c3c;transform:scaleX(0.890);transform-origin:0 0">41.00</div>
<div class="a" style="left:782.98px;top:608.17px;font-size:7.00px;color:#3c3c3c;transform:scaleX(0.890);transform-origin:0 0">24,199.00</div>
<div class="a" style="left:848.08px;top:608.17px;font-size:7.00px;color:#3c3c3c;transform:scaleX(0.890);transform-origin:0 0">33,860.00</div>
<div class="a" style="left:916.18px;top:608.17px;font-size:7.00px;color:#3c3c3c;transform:scaleX(0.890);transform-origin:0 0">81,920.00</div>
<div class="a" style="left:953.30px;top:608.17px;font-size:7.00px;color:#3c3c3c;transform:scaleX(0.890);transform-origin:0 0">No</div>
<div class="a" style="left:1016.27px;top:608.17px;font-size:7.00px;color:#3c3c3c;transform:scaleX(0.890);transform-origin:0 0">90</div>
<div class="a" style="left:1063.77px;top:608.17px;font-size:7.00px;color:#3c3c3c;transform:scaleX(0.890);transform-origin:0 0">95</div>
<div class="a" style="left:1084.33px;top:608.17px;font-size:7.00px;color:#3c3c3c;transform:scaleX(0.890);transform-origin:0 0">10.11.2020 18:45</div>
<div class="a" style="left:323.40px;top:617.07px;font-size:7.00px;color:#3c3c3c;transform:scaleX(0.890);transform-origin:0 0">/mnt/ssd</div>
<div class="a" style="left:161.5px;top:445.2px;width:0.8px;height:179.7px;background:#ededed"></div>
<div class="a" style="left:269.1px;top:400.6px;width:1.3px;height:229.2px;background:#d9d9d9"></div>
<div class="a" style="left:318.6px;top:445.2px;width:0.8px;height:184.6px;background:#ededed"></div>
<div class="a" style="left:357.6px;top:445.2px;width:0.8px;height:184.6px;background:#ededed"></div>
<div class="a" style="left:401.8px;top:445.2px;width:0.8px;height:184.6px;background:#ededed"></div>
<div class="a" style="left:424.4px;top:445.2px;width:0.8px;height:184.6px;background:#ededed"></div>
<div class="a" style="left:469.5px;top:445.2px;width:0.8px;height:184.6px;background:#ededed"></div>
<div class="a" style="left:558.5px;top:445.2px;width:0.8px;height:184.6px;background:#ededed"></div>
<div class="a" style="left:596.8px;top:445.2px;width:0.8px;height:184.6px;background:#ededed"></div>
<div class="a" style="left:624.3px;top:445.2px;width:0.8px;height:184.6px;background:#ededed"></div>
<div class="a" style="left:665.6px;top:445.2px;width:0.8px;height:184.6px;background:#ededed"></div>
<div class="a" style="left:691.6px;top:445.2px;width:0.8px;height:184.6px;background:#ededed"></div>
<div class="a" style="left:755.4px;top:445.2px;width:0.8px;height:184.6px;background:#ededed"></div>
<div class="a" style="left:815.3px;top:445.2px;width:0.8px;height:184.6px;background:#ededed"></div>
<div class="a" style="left:880.4px;top:445.2px;width:0.8px;height:184.6px;background:#ededed"></div>
<div class="a" style="left:948.5px;top:445.2px;width:0.8px;height:184.6px;background:#ededed"></div>
<div class="a" style="left:984.4px;top:445.2px;width:0.8px;height:184.6px;background:#ededed"></div>
<div class="a" style="left:1027.8px;top:445.2px;width:0.8px;height:184.6px;background:#ededed"></div>
<div class="a" style="left:1075.3px;top:445.2px;width:0.8px;height:184.6px;background:#ededed"></div>
<div class="a" style="left:1140.4px;top:445.2px;width:0.8px;height:184.6px;background:#ededed"></div>
<div class="a" style="left:131.3px;top:624.9px;width:137.7px;height:17.8px;background:#dddddd"></div>
<div class="a" style="left:270.6px;top:629.8px;width:870.6px;height:18.5px;background:#dddddd"></div>
<div class="a" style="left:161.5px;top:624.9px;width:0.8px;height:17.8px;background:#d2d2d2"></div>
<div class="a" style="left:136.00px;top:625.60px;font-size:7.20px;color:#2a2a2a;font-weight:bold;transform:scaleX(0.900);transform-origin:0 0">Ove...</div>
<div class="a" style="left:318.6px;top:629.8px;width:0.8px;height:18.5px;background:#d2d2d2"></div>
<div class="a" style="left:357.6px;top:629.8px;width:0.8px;height:18.5px;background:#d2d2d2"></div>
<div class="a" style="left:401.8px;top:629.8px;width:0.8px;height:18.5px;background:#d2d2d2"></div>
<div class="a" style="left:424.4px;top:629.8px;width:0.8px;height:18.5px;background:#d2d2d2"></div>
<div class="a" style="left:469.5px;top:629.8px;width:0.8px;height:18.5px;background:#d2d2d2"></div>
<div class="a" style="left:558.5px;top:629.8px;width:0.8px;height:18.5px;background:#d2d2d2"></div>
<div class="a" style="left:596.8px;top:629.8px;width:0.8px;height:18.5px;background:#d2d2d2"></div>
<div class="a" style="left:624.3px;top:629.8px;width:0.8px;height:18.5px;background:#d2d2d2"></div>
<div class="a" style="left:665.6px;top:629.8px;width:0.8px;height:18.5px;background:#d2d2d2"></div>
<div class="a" style="left:691.6px;top:629.8px;width:0.8px;height:18.5px;background:#d2d2d2"></div>
<div class="a" style="left:755.4px;top:629.8px;width:0.8px;height:18.5px;background:#d2d2d2"></div>
<div class="a" style="left:815.3px;top:629.8px;width:0.8px;height:18.5px;background:#d2d2d2"></div>
<div class="a" style="left:880.4px;top:629.8px;width:0.8px;height:18.5px;background:#d2d2d2"></div>
<div class="a" style="left:948.5px;top:629.8px;width:0.8px;height:18.5px;background:#d2d2d2"></div>
<div class="a" style="left:984.4px;top:629.8px;width:0.8px;height:18.5px;background:#d2d2d2"></div>
<div class="a" style="left:1027.8px;top:629.8px;width:0.8px;height:18.5px;background:#d2d2d2"></div>
<div class="a" style="left:1075.3px;top:629.8px;width:0.8px;height:18.5px;background:#d2d2d2"></div>
<div class="a" style="left:717.65px;top:629.70px;font-size:7.20px;color:#1e1e1e;font-weight:bold;transform:scaleX(0.920);transform-origin:0 0">817,435.00</div>
<div class="a" style="left:781.23px;top:629.70px;font-size:7.20px;color:#1e1e1e;font-weight:bold;transform:scaleX(0.920);transform-origin:0 0">48,079.00</div>
<div class="a" style="left:842.65px;top:629.70px;font-size:7.20px;color:#1e1e1e;font-weight:bold;transform:scaleX(0.920);transform-origin:0 0">875,181.00</div>
<div class="a" style="left:131.3px;top:648.3px;width:1764.3999999999999px;height:0.8px;background:#e4e4e4"></div>
<div class="a" style="left:137.70px;top:651.87px;font-size:7.00px;color:#4a4a4a;transform:scaleX(0.930);transform-origin:0 0">1 rows selected</div>
<div class="a" style="left:1867.48px;top:651.87px;font-size:7.00px;color:#4a4a4a;transform:scaleX(0.890);transform-origin:0 0">Total 10</div>
</body></html>
